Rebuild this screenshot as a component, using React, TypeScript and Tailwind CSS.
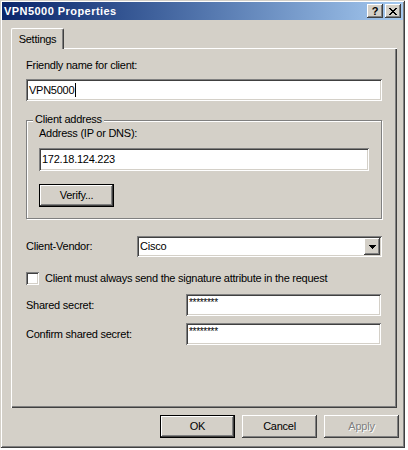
import React from "react";

// Win2000 classic 3D edges
const raised = "shadow-[inset_-1px_-1px_#404040,inset_1px_1px_#ffffff,inset_-2px_-2px_#808080]";
const sunken = "shadow-[inset_1px_1px_#808080,inset_-1px_-1px_#ffffff,inset_2px_2px_#404040,inset_-2px_-2px_#d4d0c8]";
const font = "font-['Liberation_Sans',Arial,sans-serif] text-[11px] leading-[13px] tracking-[-0.25px]";

function Field({ value, className = "", secret = false, caret = false }: { value: string; className?: string; secret?: boolean; caret?: boolean }) {
  return (
    <div className={`flex h-[22px] bg-white pl-[3px] ${sunken} ${className} ${secret ? "items-start pt-[4px]" : "items-center"}`}>
      {secret ? (
        <span className="text-[10px] leading-[10px] tracking-[-0.3px] text-black">{value}</span>
      ) : (
        <span className="text-black">{value}</span>
      )}
      {caret && <span className="ml-px h-[14px] w-px bg-black" />}
    </div>
  );
}

function Button({ label, isDefault = false, disabled = false, className = "" }: { label: string; isDefault?: boolean; disabled?: boolean; className?: string }) {
  return (
    <div
      className={`flex h-[23px] w-[75px] items-center justify-center bg-[#d4d0c8] ${
        isDefault
          ? "border border-black shadow-[inset_-1px_-1px_#404040,inset_1px_1px_#ffffff,inset_-2px_-2px_#808080]"
          : raised
      } ${className}`}
    >
      <span className={disabled ? "text-[#808080] [text-shadow:1px_1px_#ffffff]" : "text-black"}>{label}</span>
    </div>
  );
}

function CaptionButton({ children }: { children: React.ReactNode }) {
  return (
    <div className={`flex h-[14px] w-[16px] items-center justify-center bg-[#d4d0c8] ${raised}`}>{children}</div>
  );
}

export default function App() {
  return (
    <div className={`min-h-[450px] bg-white ${font}`}>
      <div
        className={`flex h-[448px] w-[405px] flex-col bg-[#d4d0c8] p-[2px] shadow-[inset_1px_1px_#d4d0c8,inset_-1px_-1px_#404040,inset_2px_2px_#ffffff,inset_-2px_-2px_#808080]`}
      >
        {/* Title bar */}
        <div className="flex h-[18px] items-center bg-gradient-to-r from-[#0a246a] to-[#a6caf0] pl-[2px] pr-[2px]">
          <span className="flex-1 text-[11px] font-bold tracking-[0.45px] text-white">VPN5000 Properties</span>
          <CaptionButton>
            <span className="text-[11px] font-bold leading-none tracking-normal text-black">?</span>
          </CaptionButton>
          <div className="w-[2px]" />
          <CaptionButton>
            <svg width="8" height="7" viewBox="0 0 8 7" shapeRendering="crispEdges">
              <path d="M0 0h2v1h1v1h2V1h1V0h2v1H7v1H6v1H5v1h1v1h1v1h1v1H6V6H5V5H3v1H2v1H0V6h1V5h1V4h1V3H2V2H1V1H0z" fill="#000" />
            </svg>
          </CaptionButton>
        </div>

        {/* Tabs */}
        <div className="ml-[9px] mt-[8px] flex w-[386px]">
          <div className="flex h-[21px] w-[53px] items-center justify-center rounded-t-[2px] border-l border-r border-t border-white border-r-[#404040] shadow-[inset_-1px_0_#808080]">
            <span>Settings</span>
          </div>
          <div className="h-[21px] flex-1 border-b border-white" />
        </div>

        {/* Tab panel */}
        <div className="ml-[9px] flex h-[359px] w-[386px] flex-col px-[15px] pt-[10px] shadow-[inset_1px_0_#ffffff,inset_-1px_-1px_#404040,inset_-2px_-2px_#808080]">
          <span className="h-[13px]">Friendly name for client:</span>
          <Field value="VPN5000" caret className="mt-[7px] w-[356px]" />

          {/* Group box */}
          <div className="relative mt-[19px] flex h-[99px] w-[356px] flex-col border border-[#808080] px-[12px] pt-[6px] shadow-[inset_1px_1px_#ffffff,1px_1px_#ffffff]">
            <span className="absolute left-[6px] top-[-8px] bg-[#d4d0c8] px-[2px]">Client address</span>
            <span className="h-[13px]">Address (IP or DNS):</span>
            <Field value="172.18.124.223" className="mt-[8px] h-[23px] w-[330px]" />
            <Button label="Verify..." isDefault className="mt-[13px] w-[75px]" />
          </div>

          {/* Client vendor */}
          <div className="mt-[17px] flex h-[21px] items-center">
            <span className="w-[111px]">Client-Vendor:</span>
            <div className={`flex h-[21px] w-[245px] items-center bg-white pl-[3px] pr-[2px] ${sunken}`}>
              <span className="flex-1">Cisco</span>
              <div className={`flex h-[17px] w-[16px] items-center justify-center bg-[#d4d0c8] ${raised}`}>
                <svg width="7" height="4" viewBox="0 0 7 4" shapeRendering="crispEdges">
                  <path d="M0 0h7v1H6v1H5v1H4v1H3V3H2V2H1V1H0z" fill="#000" />
                </svg>
              </div>
            </div>
          </div>

          {/* Checkbox */}
          <div className="mt-[15px] flex h-[13px] items-center">
            <div className={`h-[13px] w-[13px] bg-white ${sunken}`} />
            <span className="ml-[6px]">Client must always send the signature attribute in the request</span>
          </div>

          {/* Secrets */}
          <div className="mt-[9px] flex items-center">
            <span className="w-[160px]">Shared secret:</span>
            <Field value="********" secret className="w-[195px]" />
          </div>
          <div className="mt-[7px] flex items-center">
            <span className="w-[160px]">Confirm shared secret:</span>
            <Field value="********" secret className="w-[195px]" />
          </div>
        </div>

        {/* Dialog buttons */}
        <div className="ml-[158px] mt-[7px] flex gap-[7px]">
          <Button label="OK" isDefault />
          <Button label="Cancel" />
          <Button label="Apply" disabled />
        </div>
      </div>
    </div>
  );
}
